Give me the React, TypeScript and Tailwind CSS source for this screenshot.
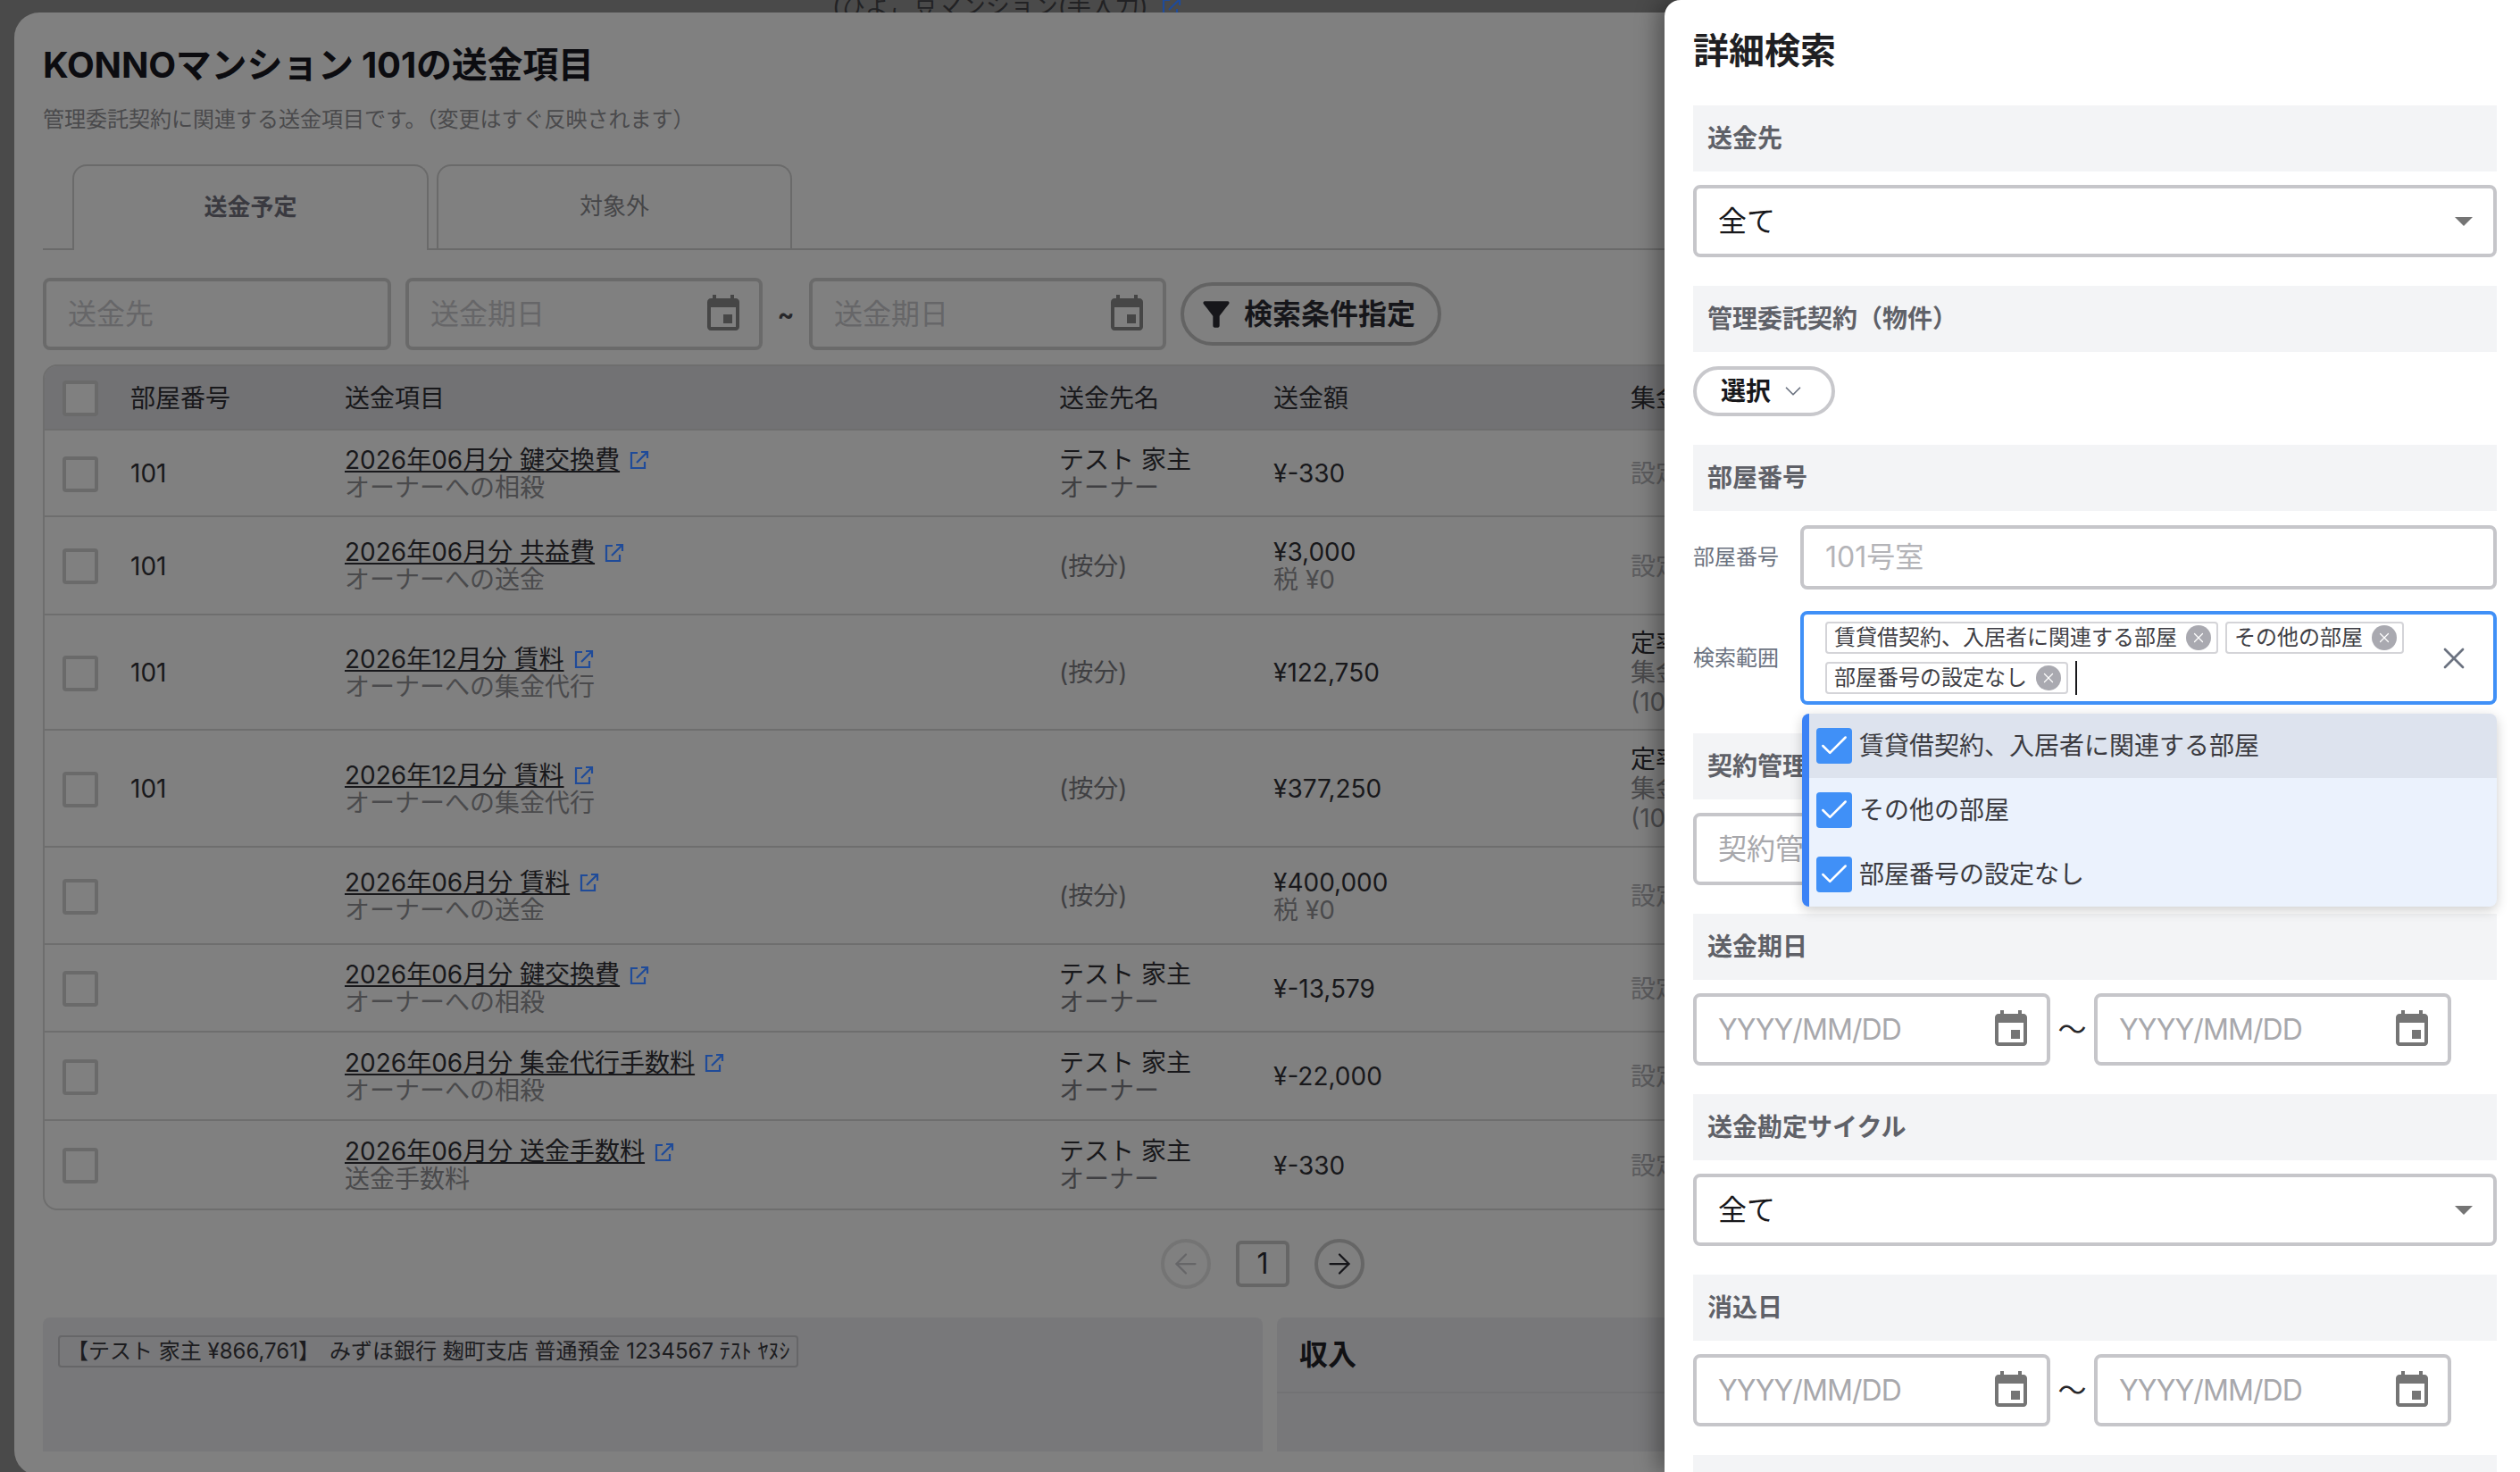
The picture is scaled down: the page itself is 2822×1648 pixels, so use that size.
import { ArrowLeft, ArrowRight, Check, ChevronDown, X } from 'lucide-react';

const rows = [
  { h: 'h-[97px]', room: '101', title: '2026年06月分 鍵交換費', sub: 'オーナーへの相殺', to: ['テスト 家主', 'オーナー'], amount: ['¥-330'] },
  { h: 'h-[110px]', room: '101', title: '2026年06月分 共益費', sub: 'オーナーへの送金', to: ['(按分)'], amount: ['¥3,000', '税 ¥0'] },
  { h: 'h-[129px]', room: '101', title: '2026年12月分 賃料', sub: 'オーナーへの集金代行', to: ['(按分)'], amount: ['¥122,750'], rate: true },
  { h: 'h-[131px]', room: '101', title: '2026年12月分 賃料', sub: 'オーナーへの集金代行', to: ['(按分)'], amount: ['¥377,250'], rate: true },
  { h: 'h-[109px]', room: '', title: '2026年06月分 賃料', sub: 'オーナーへの送金', to: ['(按分)'], amount: ['¥400,000', '税 ¥0'] },
  { h: 'h-[98px]', room: '', title: '2026年06月分 鍵交換費', sub: 'オーナーへの相殺', to: ['テスト 家主', 'オーナー'], amount: ['¥-13,579'] },
  { h: 'h-[99px]', room: '', title: '2026年06月分 集金代行手数料', sub: 'オーナーへの相殺', to: ['テスト 家主', 'オーナー'], amount: ['¥-22,000'] },
  { h: 'h-[98px]', room: '', title: '2026年06月分 送金手数料', sub: '送金手数料', to: ['テスト 家主', 'オーナー'], amount: ['¥-330'] },
];

const scopes = ['賃貸借契約、入居者に関連する部屋', 'その他の部屋', '部屋番号の設定なし'];

function CalendarIcon({ className }: { className: string }) {
  return (
    <svg viewBox="0 0 24 24" className={`h-12 w-12 flex-none fill-current ${className}`}>
      <path d="M17 12h-5v5h5v-5zM16 1v2H8V1H6v2H5c-1.11 0-1.99.9-1.99 2L3 19c0 1.1.89 2 2 2h14c1.1 0 2-.9 2-2V5c0-1.1-.9-2-2-2h-1V1h-2zm3 18H5V8h14v11z" />
    </svg>
  );
}

function LinkIcon({ className = '' }: { className?: string }) {
  return (
    <svg viewBox="0 0 22 22" className={`h-[22px] w-[22px] flex-none fill-none stroke-[#1f4b99] stroke-[2.2] ${className}`}>
      <path d="M9 3H2v17h15v-7" />
      <path d="M8 14 20 2M13 2h7v7" />
    </svg>
  );
}

function Box() {
  return <div className="h-10 w-10 flex-none rounded border-4 border-[#6a6a6a] bg-[#808080]" />;
}

// dimmed date field on the modal behind the panel
function BackDate() {
  return (
    <div className="flex h-[81px] w-[400px] items-center rounded-lg border-4 border-[#6a6a6a] pl-6 pr-4">
      <span className="flex-1 text-[32px] text-[#666668]">送金期日</span>
      <CalendarIcon className="text-[#464646]" />
    </div>
  );
}

function DateField() {
  return (
    <div className="flex h-[81px] w-[400px] items-center rounded-lg border-4 border-[#c6c6ca] pl-6 pr-4">
      <span className="flex-1 text-[32px] tracking-[-0.9px] text-[#a8a8ac]">YYYY/MM/DD</span>
      <CalendarIcon className="text-[#757575]" />
    </div>
  );
}

function DateRange() {
  return (
    <div className="mt-[15px] flex items-center">
      <DateField />
      <span className="w-[49px] flex-none text-center text-[32px] text-[#27272a]">〜</span>
      <DateField />
    </div>
  );
}

function SelectAll() {
  return (
    <div className="mt-[15px] flex h-[81px] items-center rounded-lg border-4 border-[#c6c6ca] pl-6 pr-[23px]">
      <span className="flex-1 text-[32px] text-[#18181b]">全て</span>
      <svg viewBox="0 0 20 10" className="h-[10px] w-5 fill-[#757575]">
        <path d="M0 0h20L10 10z" />
      </svg>
    </div>
  );
}

function SectionBar({ label }: { label: string }) {
  return (
    <div className="flex h-[74px] items-center bg-[#f3f4f6] pl-4 text-[28px] font-bold text-[#5f6168]">{label}</div>
  );
}

function Chip({ label }: { label: string }) {
  return (
    <div className="flex h-9 items-center gap-[10px] rounded border-2 border-[#d4d4d8] pl-2 pr-[6px] text-2xl text-[#3f3f46]">
      <span>{label}</span>
      <span className="flex h-7 w-7 items-center justify-center rounded-full bg-[#a9a9b0] text-white">
        <X size={18} strokeWidth={1.6} />
      </span>
    </div>
  );
}

export default function App() {
  return (
    <div className="relative h-[1648px] w-[2822px] overflow-hidden bg-[#4a4a4a] font-['Inter','Noto_Sans_CJK_JP',sans-serif]">
      {/* page behind the modal, only a sliver is visible */}
      <div className="absolute left-[932px] top-[-12px] flex items-center gap-[15px] text-[27px] leading-[40px] text-[#222224]">
        (ひよこ豆マンション(手入力)
        <LinkIcon />
      </div>

      <div className="flex h-full">
        <div className="w-[1864px] flex-none pl-4 pt-[14px]">
          {/* Modal */}
          <div className="relative h-[1638px] w-[2796px] rounded-[28px] bg-[#808080] px-8 pt-[31px]">
            <h1 className="text-[40px] font-bold leading-[56px] tracking-[-0.2px] text-[#0c0c10]">KONNOマンション 101の送金項目</h1>
            <p className="mt-[15px] text-2xl leading-9 text-[#4a4a4c]">管理委託契約に関連する送金項目です。（変更はすぐ反映されます）</p>

            {/* Tabs */}
            <div className="mt-8 flex gap-[9px] border-b-2 border-[#6a6a6a] pl-[33px]">
              <div className="-mb-[2px] flex h-[96px] w-[399px] items-center justify-center rounded-t-2xl border-2 border-b-0 border-[#6a6a6a] bg-[#808080] pb-1 text-[26px] font-bold text-[#3a3a40]">送金予定</div>
              <div className="flex h-[94px] w-[398px] items-center justify-center rounded-t-2xl border-2 border-b-0 border-[#6a6a6a] pb-1 text-[26px] text-[#464648]">対象外</div>
            </div>

            {/* Filters */}
            <div className="mt-[31px] flex items-center">
              <div className="flex h-[81px] w-[390px] items-center rounded-lg border-4 border-[#6a6a6a] pl-6 text-[32px] text-[#666668]">送金先</div>
              <div className="ml-4"><BackDate /></div>
              <span className="w-[52px] text-center text-[28px] font-bold text-[#27272a]">~</span>
              <BackDate />
              <button className="ml-4 flex h-[71px] items-center rounded-full border-4 border-[#636363] pl-[14px] pr-[25px]">
                <svg viewBox="0 0 24 24" className="h-11 w-11 fill-[#16161a]">
                  <path d="M4.25 5.61C6.27 8.2 10 13 10 13v6c0 .55.45 1 1 1h2c.55 0 1-.45 1-1v-6s3.72-4.8 5.74-7.39c.51-.66.04-1.61-.79-1.61H5.04c-.83 0-1.3.95-.79 1.61z" />
                </svg>
                <span className="ml-[9px] text-[32px] font-bold text-[#16161a]">検索条件指定</span>
              </button>
            </div>

            {/* Table */}
            <div className="mt-4 overflow-hidden rounded-2xl border-2 border-[#6e6e6e] text-[28px] leading-[31px]">
              <div className="flex h-[72px] items-center border-b-2 border-[#6e6e6e] bg-[#727274] pt-[2px] text-[#18181b]">
                <div className="w-[96px] flex-none pl-5"><Box /></div>
                <div className="w-[240px] flex-none">部屋番号</div>
                <div className="w-[800px] flex-none">送金項目</div>
                <div className="w-[240px] flex-none">送金先名</div>
                <div className="w-[400px] flex-none">送金額</div>
                <div>集金代行</div>
              </div>
              {rows.map((row, i) => (
                <div key={i} className={`flex items-center border-b-2 border-[#6e6e6e] pt-[2px] last:border-b-0 ${row.h}`}>
                  <div className="w-[96px] flex-none pl-5"><Box /></div>
                  <div className="w-[240px] flex-none text-[#18181b]">{row.room}</div>
                  <div className="w-[800px] flex-none">
                    <div className="flex items-center gap-[11px]">
                      <span className="text-[#18181b] underline underline-offset-2">{row.title}</span>
                      <LinkIcon />
                    </div>
                    <div className="text-[#4a4a4c]">{row.sub}</div>
                  </div>
                  <div className="w-[240px] flex-none">
                    {row.to.map((t, j) => (
                      <div key={j} className={j === 0 && row.to.length > 1 ? 'text-[#18181b]' : 'text-[#3f3f42]'}>{t}</div>
                    ))}
                  </div>
                  <div className="w-[400px] flex-none">
                    {row.amount.map((a, j) => (
                      <div key={j} className={j === 0 ? 'text-[#18181b]' : 'text-[#4a4a4c]'}>{a}</div>
                    ))}
                  </div>
                  {row.rate ? (
                    <div className="leading-[33px]">
                      <div className="text-[#18181b]">定率</div>
                      <div className="text-[#4a4a4c]">集金代行</div>
                      <div className="text-[#4a4a4c]">(10%)</div>
                    </div>
                  ) : (
                    <div className="text-[#5c5c5e]">設定なし</div>
                  )}
                </div>
              ))}
            </div>

            {/* Pagination */}
            <div className="mt-8 flex items-center justify-center gap-4">
              <div className="flex h-14 w-14 items-center justify-center rounded-full border-4 border-[#747474] text-[#666668]">
                <ArrowLeft size={36} strokeWidth={1.5} />
              </div>
              <div className="mx-3 flex h-[52px] w-[60px] items-center justify-center rounded-md border-4 border-[#666666] text-[32px] text-[#16161a]">1</div>
              <div className="flex h-14 w-14 items-center justify-center rounded-full border-4 border-[#666666] text-[#16161a]">
                <ArrowRight size={36} strokeWidth={1.5} />
              </div>
            </div>

            {/* Bottom cards */}
            <div className="mt-8 flex h-[150px] gap-4">
              <div className="w-[1366px] flex-none rounded-t-lg bg-[#78787a] pl-[17px] pt-5">
                <div className="inline-flex h-9 items-center rounded border-2 border-[#666668] px-2 text-2xl whitespace-nowrap text-[#1c1c1f]">
                  <span>【テスト 家主 ¥866,761】</span>
                  <span className="ml-[11px]">みずほ銀行 麹町支店 普通預金 1234567 ﾃｽﾄ ﾔﾇｼ</span>
                </div>
              </div>
              <div className="flex-1 rounded-t-lg bg-[#78787a]">
                <div className="flex h-[85px] items-center border-b-2 border-[#727274] pl-[25px] text-[32px] font-bold text-[#111114]">収入</div>
              </div>
            </div>
          </div>
        </div>

        {/* Search panel */}
        <aside className="relative z-10 h-full w-[958px] flex-none overflow-hidden rounded-tl-[18px] bg-white pl-8 pr-[26px] shadow-[-8px_0_24px_rgba(0,0,0,0.35)]">
          <h2 className="mb-[37px] pt-[33px] text-[40px] font-bold leading-[48px] text-[#1f1f23]">詳細検索</h2>

          <section className="mb-8">
            <SectionBar label="送金先" />
            <SelectAll />
          </section>

          <section className="mb-8">
            <SectionBar label="管理委託契約（物件）" />
            <button className="mt-4 flex h-14 w-[159px] items-center rounded-full border-4 border-[#c8c8cc] pl-[27px] text-[28px] font-semibold text-[#18181b]">
              選択
              <ChevronDown size={30} strokeWidth={1.4} className="ml-[10px] text-[#6b7280]" />
            </button>
          </section>

          <section className="mb-8">
            <SectionBar label="部屋番号" />
            <div className="mt-4 flex items-center">
              <span className="w-[120px] flex-none text-2xl text-[#6b7280]">部屋番号</span>
              <div className="flex h-[72px] flex-1 items-center rounded-lg border-4 border-[#c6c6ca] pl-6 text-[32px] text-[#b4b4b8]">101号室</div>
            </div>
            <div className="relative mt-6 flex items-center">
              <span className="w-[120px] flex-none text-2xl text-[#6b7280]">検索範囲</span>
              <div className="flex h-[105px] flex-1 items-center rounded-lg border-4 border-[#4090f7] pl-6 pr-6">
                <div className="flex flex-1 flex-wrap items-center gap-x-2 gap-y-[8px]">
                  {scopes.map((s) => (
                    <Chip key={s} label={s} />
                  ))}
                  <span className="h-[38px] w-[2px] bg-[#18181b]" />
                </div>
                <X size={40} strokeWidth={1.6} className="flex-none text-[#6b7280]" />
              </div>
              {/* open dropdown */}
              <div className="absolute left-[122px] top-[calc(100%+10px)] z-20 w-[778px] overflow-hidden rounded-lg border-l-8 border-[#3b82f6] bg-[#ebf2fd] shadow-[0_4px_14px_rgba(0,0,0,0.2)]">
                {scopes.map((s, i) => (
                  <div key={s} className={`flex h-[72px] items-center gap-2 pl-2 text-[28px] text-[#3a3a40] ${i === 0 ? 'bg-[#dde3ee]' : ''}`}>
                    <span className="flex h-10 w-10 items-center justify-center rounded bg-[#4090f7] text-white">
                      <Check size={38} strokeWidth={1.6} />
                    </span>
                    {s}
                  </div>
                ))}
              </div>
            </div>
          </section>

          <section className="mb-8">
            <SectionBar label="契約管理者" />
            <div className="mt-[15px] flex h-[81px] items-center rounded-lg border-4 border-[#c6c6ca] pl-6 text-[32px] text-[#a8a8ac]">契約管理者</div>
          </section>

          <section className="mb-8">
            <SectionBar label="送金期日" />
            <DateRange />
          </section>

          <section className="mb-8">
            <SectionBar label="送金勘定サイクル" />
            <SelectAll />
          </section>

          <section className="mb-8">
            <SectionBar label="消込日" />
            <DateRange />
          </section>

          <div className="h-[74px] bg-[#f3f4f6]" />
        </aside>
      </div>
    </div>
  );
}
